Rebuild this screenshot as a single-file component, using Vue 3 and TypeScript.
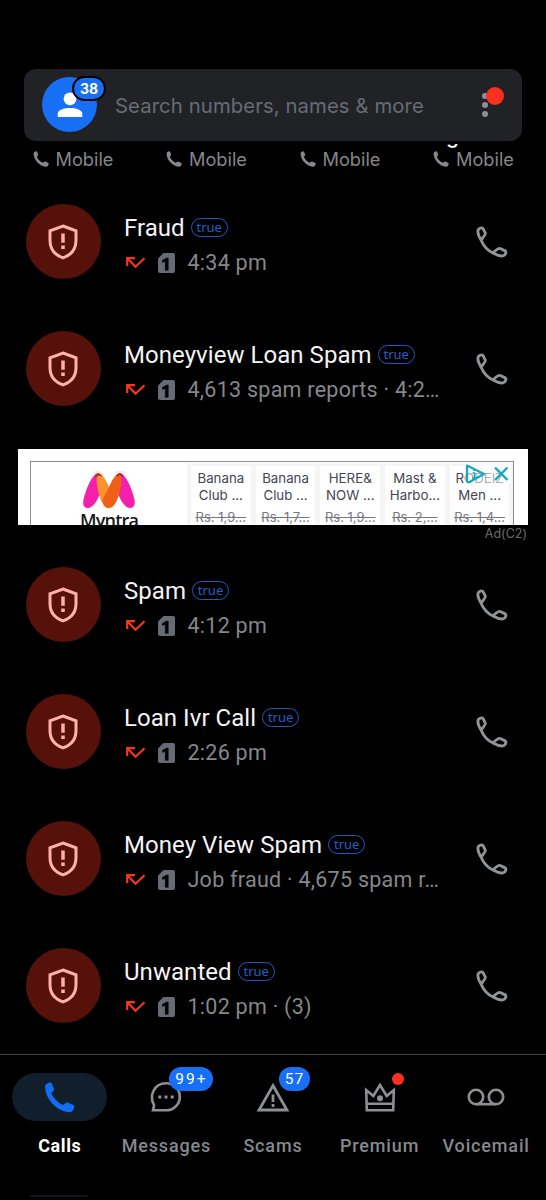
<script setup lang="ts">
interface Call {
  name: string
  detail: string
}

const favourites: string[] = ['', '', '', 'g']

const earlier: Call[] = [
  { name: 'Fraud', detail: '4:34 pm' },
  { name: 'Moneyview Loan Spam', detail: '4,613 spam reports · 4:2…' },
]
const later: Call[] = [
  { name: 'Spam', detail: '4:12 pm' },
  { name: 'Loan Ivr Call', detail: '2:26 pm' },
  { name: 'Money View Spam', detail: 'Job fraud · 4,675 spam r…' },
  { name: 'Unwanted', detail: '1:02 pm · (3)' },
]
const sections = [
  { id: 'earlier', calls: earlier, ad: true },
  { id: 'later', calls: later, ad: false },
]

const products = [
  { l1: 'Banana', l2: 'Club ...', price: 'Rs. 1,9...' },
  { l1: 'Banana', l2: 'Club ...', price: 'Rs. 1,7...' },
  { l1: 'HERE&', l2: 'NOW ...', price: 'Rs. 1,9...' },
  { l1: 'Mast &', l2: 'Harbo...', price: 'Rs. 2,...' },
  { l1: 'RODEIZ', l2: 'Men ...', price: 'Rs. 1,4...' },
]

const solidPhone =
  'M1.2 3.8C1.8 1.9 4 .6 6 .5C7 .5 7.6 1 8 2L9.800 6.400C10.200 7.400 10 8.200 9.300 9L7.300 11.200C9 15.500 14 20.800 19 23L21.700 21C22.500 20.400 23.400 20.300 24.300 20.700L28.900 22.700C30 23.200 30.500 24 30.300 25C29.700 28 28 30.500 25 30.300C12 29 .4 16 1.200 3.800Z'
</script>

<template>
  <main class="screen">
    <header class="top">
      <div class="search">
        <div class="profile">
          <svg width="26" height="26" viewBox="0 0 26 26"><circle cx="13" cy="6.800" r="6.400" fill="#fff" /><path d="M.7 25V21.500C.7 17.800 7 15.900 13 15.900S25.300 17.800 25.300 21.500V25Z" fill="#fff" /></svg>
          <span class="count">38</span>
        </div>
        <span class="hint">Search numbers, names &amp; more</span>
        <div class="more"><i /><i /><i /><b /></div>
      </div>
    </header>

    <section class="favs">
      <div v-for="(f, i) in favourites" :key="i" class="fav">
        <span class="favname">{{ f }}</span>
        <svg width="16" height="16" viewBox="0 0 31 31"><path :d="solidPhone" fill="#85898d" /></svg>
        <span class="kind">Mobile</span>
      </div>
    </section>

    <template v-for="s in sections" :key="s.id">
      <article v-for="c in s.calls" :key="c.name" class="call">
        <div class="shield">
          <svg width="30" height="36" viewBox="0 0 30 36" fill="none">
            <path d="M15 2L28 6.800V16.500C28 24.500 23.500 31 15 33.900C6.500 31 2 24.500 2 16.500V6.800Z" stroke="#ffb1aa" stroke-width="3" />
            <path d="M15 9.500V18.800M15 21.500V25" stroke="#ffb1aa" stroke-width="3.500" />
          </svg>
        </div>
        <div class="info">
          <div class="line1"><span class="name">{{ c.name }}</span><span class="tag">true</span></div>
          <div class="line2">
            <svg class="missed" width="20" height="12" viewBox="0 0 20 12" fill="none" stroke="#f5361f" stroke-width="2.200"><path d="M1.200 9V1.200H9M1.500 1.500L9.500 9.800L18.500 1.200" /></svg>
            <svg class="sim" width="17" height="20" viewBox="0 0 17 20"><path d="M5.500 0H15A2 2 0 0 1 17 2V18A2 2 0 0 1 15 20H2A2 2 0 0 1 0 18V5.500Z" fill="#676b75" /><path d="M4.500 7.300L9 5H10.200V17.300H7.300V8.400L4.500 9.300Z" fill="#000" stroke="#000" stroke-width=".6" /></svg>
            <span class="detail">{{ c.detail }}</span>
          </div>
        </div>
        <svg class="dial" width="32" height="32" viewBox="0 0 32 32" fill="none" stroke="#8f9499" stroke-width="2.900" stroke-linejoin="round">
          <path d="M5 14C2.500 10 1.600 7 2 4.500C2.400 2 6.500 .9 7.300 3.100L9.300 7.200C9.700 8.600 8.500 9.800 5 14C7.500 20 11.500 24.500 17 27C21 29.300 24 30.200 27 29.900C29.500 29.500 31 25.700 28.700 24.600L24.200 22.500C22.500 21.900 21 23 17 27" />
        </svg>
      </article>

      <aside v-if="s.ad" class="adslot">
        <div class="ad">
          <div class="frame">
            <div class="brand">
              <svg width="58" height="41" viewBox="-3 -2 58 41">
                <path d="M15 3L5 30M15 3L26 30L37 3L47 30" fill="none" stroke="#ececec" stroke-width="11.500" stroke-linecap="round" stroke-linejoin="round" />
                <path d="M15 0C9 2 3 15 .5 27C-.5 32 1.500 35.300 5.500 35C11 34 16 25 18 17L15 2Z" fill="#f51fae" />
                <path d="M37 0C43 2 49 15 51.500 27C52.500 32 50.500 35.300 46.500 35C41 34 36 25 34 17L37 2Z" fill="#f51fae" />
                <path d="M15 0C19 1 23 7 26 14L31 27C30 32 29 35 26 35C20 35 16 24 14.500 15C13.500 9 13 4 15 0Z" fill="#fb922b" />
                <path d="M37 0C33 1 29 7 26 14L19.500 27C20 32 22 35 26 35C32 35 36 24 37.500 15C38.500 9 39 4 37 0Z" fill="#f05f18" />
                <path d="M11 3.800Q15-3 19.500 3.500L17.500 3Q15 1.500 13.500 4Z" fill="#a83a15" />
                <path d="M32.500 3.500Q37-3 41 3.800L39 3.500Q37 1.500 34.500 3Z" fill="#b42222" />
              </svg>
              <strong>Myntra</strong>
            </div>
            <div class="cards">
              <div v-for="(p, i) in products" :key="i" class="card">
                <span>{{ p.l1 }}</span><span>{{ p.l2 }}</span><s>{{ p.price }}</s>
              </div>
            </div>
          </div>
          <svg class="choices" width="46" height="20" viewBox="0 0 46 20" fill="none">
            <path d="M0 0H46V20H0Z" fill="#fff" fill-opacity=".55" />
            <path d="M2 1.500L19 10L4.500 18Q2 19 2 16.500Z" stroke="#14a9c0" stroke-width="2.200" stroke-linejoin="round" />
            <path d="M9 5V7M7.500 9H9.500V14M7 14H12" stroke="#14a9c0" stroke-width="1.600" />
            <path d="M30 3.500L42.500 16M42.500 3.500L30 16" stroke="#14a9c0" stroke-width="2.400" />
          </svg>
        </div>
        <span class="adlabel">Ad(C2)</span>
      </aside>
    </template>

    <nav class="nav">
      <div class="tab active">
        <div class="pill"><svg width="31" height="31" viewBox="0 0 31 31"><path :d="solidPhone" fill="#126df5" /></svg></div>
        <span class="label">Calls</span>
      </div>
      <div class="tab">
        <div class="pill">
          <svg width="32" height="32" viewBox="0 0 32 32" fill="none"><path d="M3 29.300L4.100 24.300C-1 15.500 3.500 2.200 16 2.200C24 2.200 29.800 8.300 29.800 15.800C29.800 23.500 23.500 29.300 16 29.300Z" stroke="#8c9095" stroke-width="2.600" /><path d="M8.300 14.500h3v3h-3zM14.500 14.500h3v3h-3zM20.700 14.500h3v3h-3z" fill="#8c9095" /></svg>
          <span class="badge wide">99+</span>
        </div>
        <span class="label">Messages</span>
      </div>
      <div class="tab">
        <div class="pill">
          <svg width="34" height="32" viewBox="0 0 34 32" fill="none" stroke="#8c9095"><path d="M17 4.500L31 29H3Z" stroke-width="2.800" /><path d="M17 13.500V21M17 23V26" stroke-width="2.800" /></svg>
          <span class="badge">57</span>
        </div>
        <span class="label">Scams</span>
      </div>
      <div class="tab">
        <div class="pill">
          <svg width="32" height="32" viewBox="0 0 32 32" fill="none" stroke="#8c9095" stroke-width="2.600"><path d="M2.800 29.300L2.200 9L9.300 15L16 4L22.700 15L29.800 9L29.200 29.300ZM2.800 22.700H29.200" /><circle cx="16" cy="17.300" r="3" fill="#8c9095" stroke="none" /></svg>
          <span class="dot" />
        </div>
        <span class="label">Premium</span>
      </div>
      <div class="tab">
        <div class="pill">
          <svg width="38" height="18" viewBox="0 0 38 18" fill="none" stroke="#8c9095" stroke-width="2.600"><circle cx="9" cy="9" r="7.200" /><circle cx="29" cy="9" r="7.200" /><path d="M9 16.200H29" /></svg>
        </div>
        <span class="label">Voicemail</span>
      </div>
    </nav>
    <div class="edge" />
  </main>
</template>

<style>
body { background: #000; }
</style>

<style scoped>
.screen { width: 546px; height: 1200px; background: #000; overflow: hidden; font-family: Roboto, "Noto Sans", sans-serif; display: flex; flex-direction: column; }
.screen > * { flex-shrink: 0; }
svg { display: block; flex: none; }
.top { height: 144px; padding: 68.500px 24px 0; box-sizing: border-box; }
.search { height: 72.500px; border-radius: 12px; background: #212226; display: flex; align-items: center; padding-left: 18px; position: relative; }
.profile { width: 55px; height: 55px; border-radius: 50%; background: #176ff5; position: relative; display: flex; align-items: center; justify-content: center; }
.count { position: absolute; left: 30px; top: -1px; width: 30px; height: 21px; border: 2px solid #000; border-radius: 13px; background: #176ff5; color: #fff; font: 700 14px/22px Inter, sans-serif; text-align: center; }
.hint { margin-left: 18px; color: #686b76; font: 400 20.300px/30px Inter, sans-serif; letter-spacing: .1px; white-space: nowrap; padding-top: 3px; }
.more { position: absolute; left: 458px; top: 24px; display: flex; flex-direction: column; gap: 3px; }
.more i { width: 6px; height: 6px; border-radius: 50%; background: #8c9094; }
.more b { position: absolute; left: 3.500px; top: -6px; width: 18px; height: 18px; border-radius: 50%; background: #fc301f; }
.favs { height: 34px; display: grid; grid-template-columns: repeat(4, 133.500px); padding-left: 32.500px; overflow: hidden; }
.fav { display: flex; gap: 7px; padding-top: 4px; height: 22px; align-items: center; color: #85878b; font: 400 18.200px/22px Inter, sans-serif; position: relative; }
.favname { position: absolute; left: 13px; top: -19px; color: #fff; font-size: 21px; font-weight: 500; }
.call { height: 127px; display: flex; align-items: center; padding-left: 26px; box-sizing: border-box; }
.shield { width: 75px; height: 75px; border-radius: 50%; background: #56110b; display: flex; align-items: center; justify-content: center; }
.shield svg { margin-right: 1px; }
.info { width: 320px; margin-left: 23px; padding-top: 7px; display: flex; flex-direction: column; gap: 5px; }
.line1 { height: 30px; display: flex; align-items: center; }
.name { color: #f4f4f4; font-size: 24px; line-height: 30px; letter-spacing: .05px; white-space: nowrap; }
.tag { box-sizing: border-box; width: 37px; height: 19px; margin: 0 0 0 6px; border: 1.500px solid #1d5bc2; border-radius: 10px; color: #245fc4; font: 400 13px/16px "Noto Sans", sans-serif; text-align: center; }
.line2 { height: 30px; display: flex; align-items: center; padding-left: 2px; }
.missed { margin-top: 1px; }
.sim { margin: 1px 0 0 12px; }
.detail { margin-left: 12.500px; color: #85878b; font-size: 21.500px; letter-spacing: .26px; white-space: nowrap; }
.dial { margin-left: 31.500px; margin-top: 1px; }
.adslot { height: 109px; padding: 17px 18px 0; box-sizing: border-box; display: flex; flex-direction: column; }
.ad { height: 75.500px; flex: none; background: #fff; overflow: hidden; position: relative; padding: 12px 14px 0 12px; box-sizing: border-box; }
.frame { height: 100px; border: 1.500px solid #8b8b8b; display: flex; box-sizing: border-box; }
.brand { width: 156px; display: flex; flex-direction: column; align-items: center; padding-top: 9px; box-sizing: border-box; flex: none; }
.brand strong { font: 600 18px/22px "Open Sans", sans-serif; letter-spacing: -.8px; color: #171717; margin-top: -3px; }
.cards { flex: 1; background: #f5f5f5; display: flex; gap: 5px; padding: 3px 3px 0 4px; margin-top: 1px; }
.card { width: 59.700px; flex: none; background: #fff; display: flex; flex-direction: column; align-items: center; color: #454650; font: 400 13.300px/16.500px Inter, sans-serif; padding-top: 4px; white-space: nowrap; }
.card s { color: #77787e; margin-top: 5.500px; font-size: 13px; }
.choices { position: absolute; left: 447px; top: 15px; }
.adlabel { align-self: flex-end; flex: none; color: #6b6b6d; font: 400 12.500px/18px Inter, sans-serif; margin-right: 1px; }
.nav { height: 126px; margin-top: 5px; border-top: 1px solid #45474a; display: grid; grid-template-columns: repeat(5, 106.600px); padding-left: 6.500px; box-sizing: border-box; }
.tab { display: flex; flex-direction: column; align-items: center; padding-top: 18px; }
.pill { width: 95px; height: 48px; border-radius: 24px; display: flex; align-items: center; justify-content: center; position: relative; }
.active .pill { background: #111e2b; }
.label { margin-top: 13px; color: #85898d; font-size: 18px; line-height: 24px; font-weight: 500; letter-spacing: .85px; white-space: nowrap; }
.active .label { color: #fff; font-weight: 700; letter-spacing: .6px; }
.badge { position: absolute; left: 53.500px; top: -6px; width: 31px; height: 24px; border-radius: 12px; background: #176ff5; color: #fff; font-size: 15.500px; line-height: 25px; letter-spacing: 1px; text-align: center; }
.wide { left: 50.500px; width: 44px; letter-spacing: 2px; }
.dot { position: absolute; left: 59.500px; top: 0; width: 12px; height: 12px; border-radius: 50%; background: #fc301f; }
.edge { width: 58px; height: 1.500px; margin: 15px 0 0 30px; background: #10151e; border-radius: 1px; }
</style>
